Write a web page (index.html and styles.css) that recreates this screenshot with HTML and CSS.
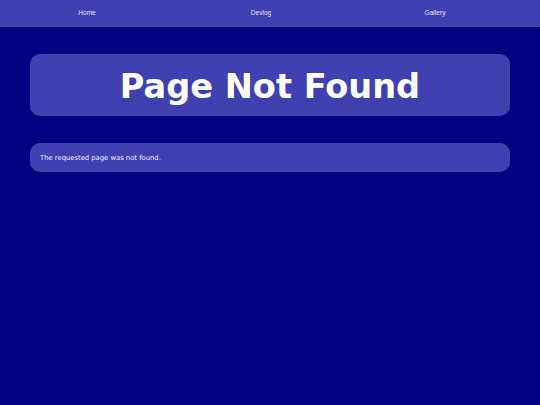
FILE: index.html
```html
<!DOCTYPE html>
<html>
<head>
<meta charset="utf-8">
<link rel="stylesheet" href="styles.css">
</head>
<body>
<nav class="nav">
  <a class="nav-link" href="#">Home</a>
  <a class="nav-link" href="#">Devlog</a>
  <a class="nav-link" href="#">Gallery</a>
</nav>
<main class="main">
  <header class="title-box"><h1 class="title">Page Not Found</h1></header>
  <section class="msg-box"><p class="msg">The requested page was not found.</p></section>
</main>
</body>
</html>
```
FILE: styles.css
```css
html, body {
  margin: 0;
  padding: 0;
  background: #000080;
  height: 100%;
}
.nav {
  display: flex;
  height: 27px;
  background: #4040b0;
  padding-right: 18px;
  font-family: "Liberation Sans", Arial, sans-serif;
  font-size: 6.6px;
}
.nav-link {
  flex: 1;
  text-align: center;
  color: #e4e4ff;
  text-decoration: none;
  line-height: 25px;
}
.main {
  padding: 27px 30px;
  display: flex;
  flex-direction: column;
  gap: 27px;
}
.title-box {
  background: #4040b0;
  border-radius: 10px;
  height: 62px;
  display: flex;
  align-items: center;
  justify-content: center;
}
.title {
  margin: 0;
  padding-top: 3px;
  font-family: "DejaVu Sans", Verdana, sans-serif;
  font-weight: bold;
  font-size: 33.6px;
  color: #ffffff;
  line-height: 1;
}
.msg-box {
  background: #4040b0;
  border-radius: 10px;
  height: 29px;
  display: flex;
  align-items: center;
  padding: 0 10px;
}
.msg {
  margin: 0;
  font-family: "DejaVu Sans", Verdana, sans-serif;
  font-size: 6.8px;
  color: #f0f0ff;
}
```
